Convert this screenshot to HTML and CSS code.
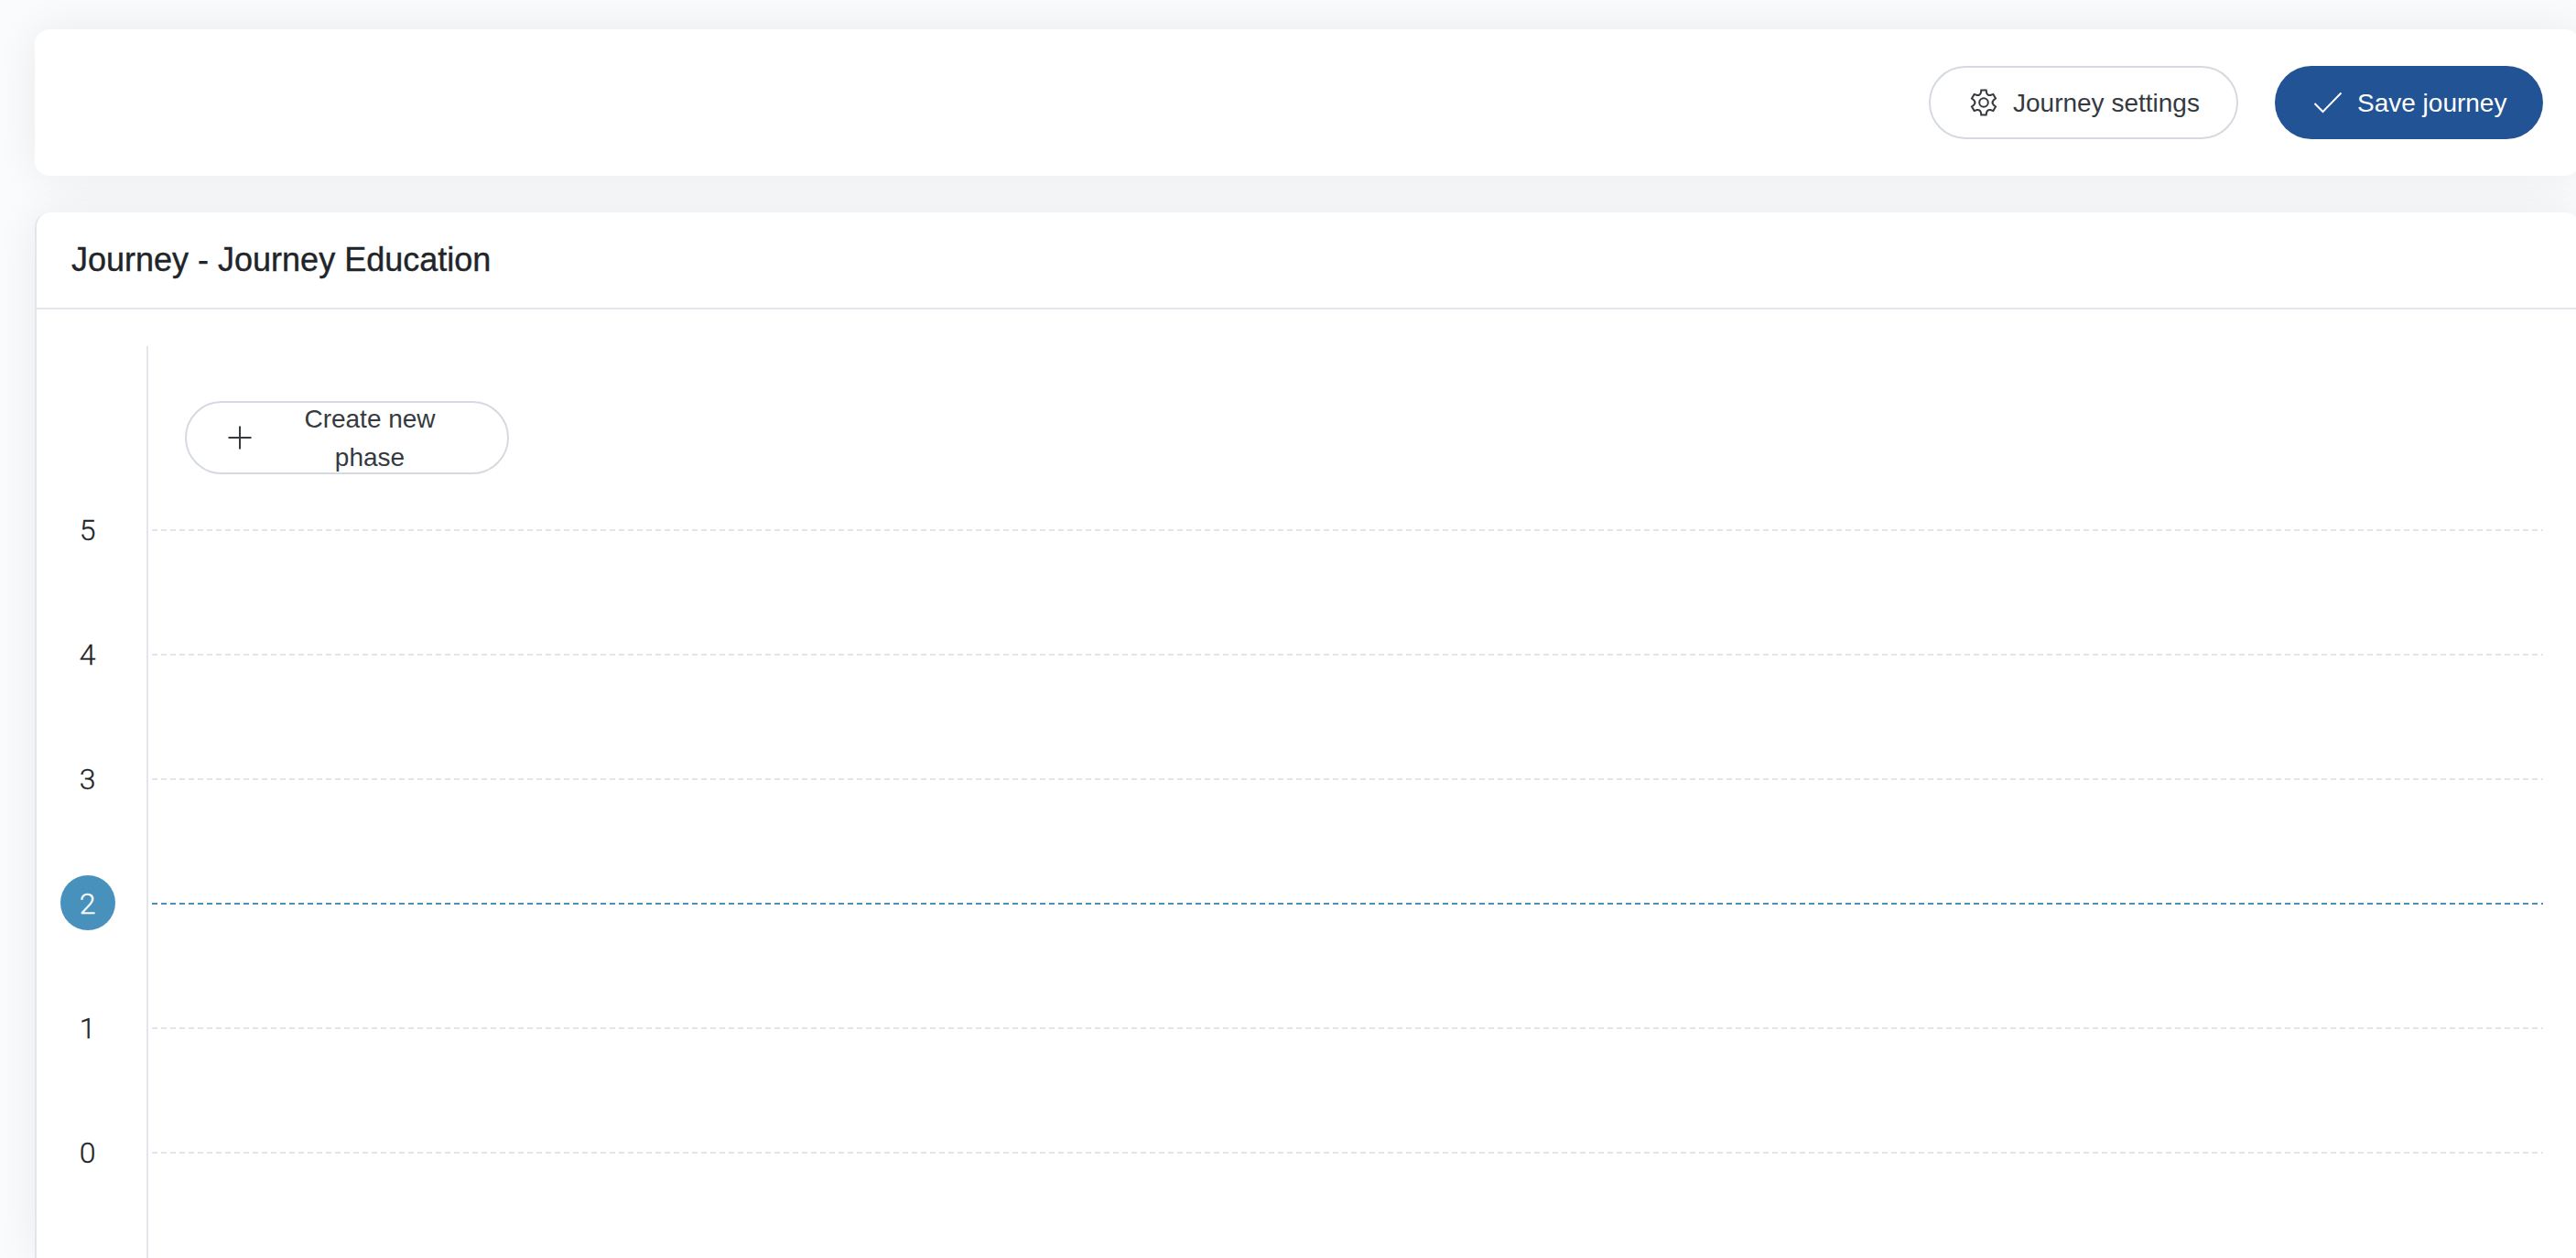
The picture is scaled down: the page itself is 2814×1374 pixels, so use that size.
FILE: index.html
```html
<!DOCTYPE html>
<html lang="en">

<head>
  <meta charset="UTF-8">
  <meta name="viewport" content="width=device-width, initial-scale=1.0">
  <title>Journey Education</title>
  <link rel="stylesheet" href="styles.css">
</head>

<body>
  <div class="page">
    <div class="card toolbar">
      <button class="btn btn-outline">
        <svg class="icon gear" viewBox="0 0 30 30">
          <path d="M12.3 1.5h5.4l.5 3.1Q19.4 7.6 22.4 7l2.95-1.1 2.7 4.7-2.45 2Q23.4 15 25.6 17.4l2.45 2-2.7 4.7L22.4 23Q19.4 22.4 18.2 25.4l-.5 3.1h-5.4l-.5-3.1Q10.6 22.4 7.6 23l-2.95 1.1-2.7-4.7 2.45-2Q6.6 15 4.4 12.6l-2.45-2 2.7-4.7L7.6 7Q10.6 7.6 11.8 4.6z" />
          <circle cx="15" cy="15" r="4.8" />
        </svg>
        <span>Journey settings</span>
      </button>
      <button class="btn btn-primary">
        <svg class="icon check" viewBox="0 0 32 24">
          <path d="M1.5 13l9 9L30.5 1.5" />
        </svg>
        <span>Save journey</span>
      </button>
    </div>

    <div class="card journey">
      <div class="journey-header">
        <h1 class="title">Journey - Journey Education</h1>
      </div>
      <div class="journey-body">
        <div class="scale">
          <div class="tick"><span>5</span></div>
          <div class="tick"><span>4</span></div>
          <div class="tick"><span>3</span></div>
          <div class="tick active"><span>2</span></div>
          <div class="tick"><span>1</span></div>
          <div class="tick"><span>0</span></div>
        </div>
        <div class="chart">
          <button class="btn btn-outline btn-phase">
            <svg class="icon plus" viewBox="0 0 26 26">
              <path d="M13 .5v25M.5 13h25" />
            </svg>
            <span>Create new phase</span>
          </button>
          <div class="lines">
            <div class="line"></div>
            <div class="line"></div>
            <div class="line"></div>
            <div class="line active"></div>
            <div class="line"></div>
            <div class="line"></div>
          </div>
        </div>
      </div>
    </div>
  </div>
</body>

</html>
```
FILE: styles.css
```css
* {
  box-sizing: border-box;
  margin: 0;
  padding: 0;
}
body {
  height: 1374px;
  overflow: hidden;
  background: #fafbfd;
  color: #212529;
  font-family: "Liberation Sans", Arial, sans-serif;
  font-size: 28px;
  line-height: 42px;
}
.page {
  display: flex;
  flex-direction: column;
  gap: 40px;
  width: 2818px;
  height: 1374px;
  padding: 32px 0 0 38px;
}
.card {
  background: #fff;
  border-radius: 16px;
  box-shadow: 0 0 48px rgba(0, 0, 0, 0.07);
}
.toolbar {
  display: flex;
  flex: none;
  align-items: center;
  justify-content: flex-end;
  gap: 40px;
  height: 160px;
  padding-right: 40px;
}
.btn {
  display: flex;
  align-items: center;
  height: 80px;
  border: 2px solid transparent;
  border-radius: 40px;
  font: inherit;
}
.btn span {
  padding-top: 2px;
}
.btn-outline {
  width: 338px;
  padding-left: 43px;
  background: #fff;
  border-color: #d5dae0;
  color: #343a40;
}
.btn-primary {
  width: 293px;
  padding-left: 40px;
  background: #225394;
  color: #fff;
}
.icon {
  flex: none;
  fill: none;
  stroke: currentColor;
  stroke-width: 2;
}
.gear {
  width: 30px;
  height: 30px;
  margin-right: 17px;
}
.check {
  width: 32px;
  height: 24px;
  margin-right: 16px;
}
.plus {
  width: 26px;
  height: 26px;
}
.journey {
  flex: 1;
  min-height: 0;
  border-left: 2px solid #e4e4eb;
  border-radius: 16px 16px 0 0;
}
.journey-header {
  height: 106px;
  padding: 25px 38px;
  border-bottom: 2px solid #e4e4eb;
}
.title {
  font-size: 36px;
  font-weight: 400;
  line-height: 54px;
  -webkit-text-stroke: 0.4px #212529;
}
.journey-body {
  display: flex;
  padding: 40px 40px 0 0;
}
.scale {
  width: 120px;
  padding: 170px 34px 0 26px;
  font-family: Roboto, sans-serif;
  font-size: 32px;
  font-weight: 300;
}
.tick {
  display: flex;
  align-items: center;
  justify-content: center;
  width: 60px;
  height: 60px;
  margin-bottom: 76px;
  padding: 1px 1px 0 0;
  border-radius: 50%;
  -webkit-text-stroke: 0.3px currentColor;
}
.tick.active {
  background: #4891bd;
  color: #fff;
}
.tick:last-child {
  margin-bottom: 0;
}
.chart {
  flex: 1;
  height: 996px;
  padding: 60px 0 0 4px;
  border-left: 2px solid #e4e4eb;
}
.btn-phase {
  width: 354px;
  margin-left: 36px;
  padding-left: 45px;
}
.btn-phase span {
  width: 160px;
  margin-left: 49px;
  text-align: center;
}
.lines {
  padding-top: 60px;
}
.line {
  height: 2px;
  margin-bottom: 134px;
  background: repeating-linear-gradient(90deg, #e4e4eb 0 6px, transparent 6px 10px);
}
.line.active {
  background: repeating-linear-gradient(90deg, #4891bd 0 6px, transparent 6px 10px);
}
.line:last-child {
  margin-bottom: 0;
}
```
